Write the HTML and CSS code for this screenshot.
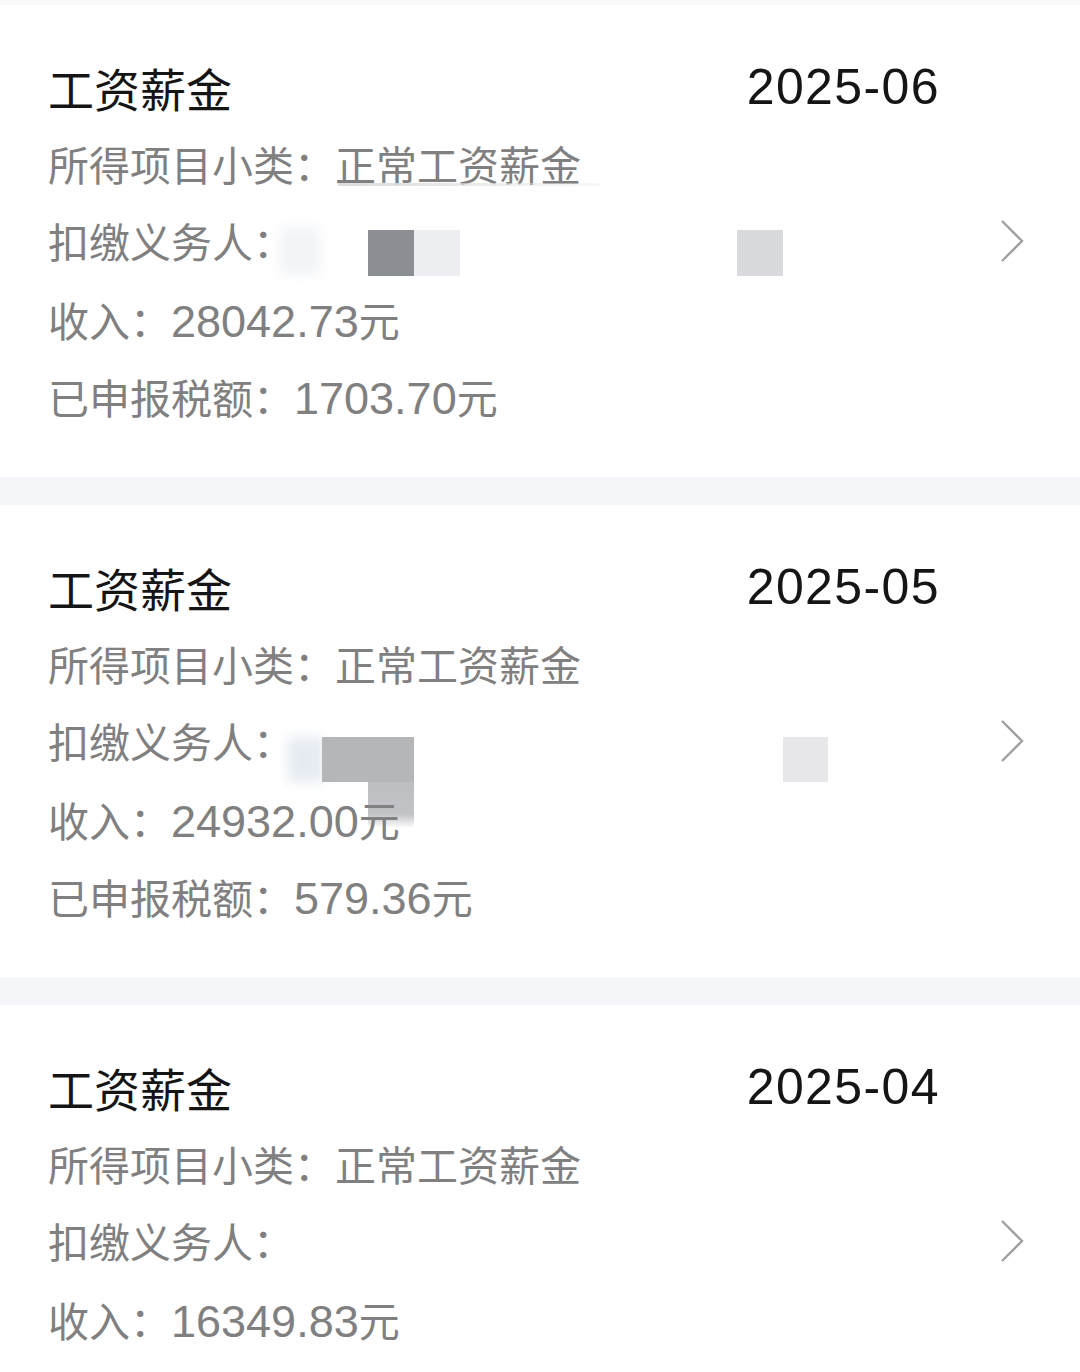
FILE: index.html
```html
<!DOCTYPE html>
<html lang="zh-CN">

<head>
    <meta charset="UTF-8">
    <meta name="viewport" content="width=device-width, initial-scale=1.0">
    <title>收入纳税明细</title>
    <link rel="stylesheet" href="styles.css">
</head>

<body>
    <div class="list">
        <div class="card">
            <div class="info">
                <div class="head">
                    <span class="title">工资薪金</span>
                    <span class="date">2025-06</span>
                </div>
                <div class="line sub">所得项目小类：正常工资薪金<span class="smear"></span></div>
                <div class="line payer">扣缴义务人：
                    <span class="mask blob m1a"></span>
                    <span class="mask m1b"></span>
                    <span class="mask m1c"></span>
                    <span class="mask m1d"></span>
                </div>
                <div class="line">收入：<span class="num">28042.73</span>元</div>
                <div class="line">已申报税额：<span class="num">1703.70</span>元</div>
            </div>
            <svg class="arrow" viewBox="0 0 24 44" width="24" height="44">
                <path d="M2 2 L22 22 L2 42" fill="none" stroke="#a0a0a0" stroke-width="2.4" />
            </svg>
        </div>

        <div class="card">
            <div class="info">
                <div class="head">
                    <span class="title">工资薪金</span>
                    <span class="date">2025-05</span>
                </div>
                <div class="line sub">所得项目小类：正常工资薪金</div>
                <div class="line payer">扣缴义务人：
                    <span class="mask blob m2a"></span>
                    <span class="mask m2b"></span>
                    <span class="mask m2c"></span>
                    <span class="mask m2d"></span>
                </div>
                <div class="line">收入：<span class="num">24932.00</span>元</div>
                <div class="line">已申报税额：<span class="num">579.36</span>元</div>
            </div>
            <svg class="arrow" viewBox="0 0 24 44" width="24" height="44">
                <path d="M2 2 L22 22 L2 42" fill="none" stroke="#a0a0a0" stroke-width="2.4" />
            </svg>
        </div>

        <div class="card last">
            <div class="info">
                <div class="head">
                    <span class="title">工资薪金</span>
                    <span class="date">2025-04</span>
                </div>
                <div class="line sub">所得项目小类：正常工资薪金</div>
                <div class="line payer">扣缴义务人：</div>
                <div class="line">收入：<span class="num">16349.83</span>元</div>
            </div>
            <svg class="arrow" viewBox="0 0 24 44" width="24" height="44">
                <path d="M2 2 L22 22 L2 42" fill="none" stroke="#a0a0a0" stroke-width="2.4" />
            </svg>
        </div>
    </div>
</body>

</html>
```

FILE: styles.css
```css
body {
    margin: 0;
    padding: 0;
    background-color: #f4f6f9;
    font-family: "Liberation Sans", "Noto Sans CJK SC", sans-serif;
}

.list {
    display: flex;
    flex-direction: column;
    gap: 28px;
    padding-top: 5px;
    background: linear-gradient(#f8f9f9 5px, transparent 5px);
}

.card {
    background-color: #ffffff;
    display: flex;
    align-items: center;
    padding: 50px 56px 40px 48px;
}

.card.last {
    align-items: flex-start;
    padding-bottom: 117px;
}

.card.last .arrow {
    margin-top: 164px;
}

.info {
    flex: 1;
}

.head {
    display: flex;
    justify-content: space-between;
    align-items: center;
    height: 64px;
    margin-bottom: 10px;
}

.title {
    font-size: 46px;
    color: #151515;
    font-family: "Noto Sans CJK SC", sans-serif;
}

.date {
    font-size: 50px;
    color: #151515;
    letter-spacing: 1.4px;
}

.line {
    position: relative;
    height: 77px;
    line-height: 77px;
    font-size: 41px;
    color: #808080;
    white-space: nowrap;
}

.num {
    font-size: 45px;
}

.arrow {
    margin-left: 60px;
    margin-bottom: 10px;
    flex-shrink: 0;
}

/* 打码遮挡 */
.mask {
    position: absolute;
    display: block;
}

.blob {
    filter: blur(6px);
}

.m1a {
    left: 232px;
    top: 22px;
    width: 40px;
    height: 46px;
    background-color: #f1f3f7;
}

.m1b {
    left: 320px;
    top: 24px;
    width: 46px;
    height: 46px;
    background-color: #8b8e92;
}

.m1c {
    left: 366px;
    top: 24px;
    width: 46px;
    height: 46px;
    background-color: #eceef1;
}

.m1d {
    left: 689px;
    top: 24px;
    width: 46px;
    height: 46px;
    background-color: #d9dadd;
}

.m2a {
    left: 240px;
    top: 31px;
    width: 36px;
    height: 45px;
    background-color: #e6ebf2;
}

.m2b {
    left: 274px;
    top: 31px;
    width: 92px;
    height: 45px;
    background-color: #b5b6b8;
}

.m2c {
    left: 320px;
    top: 76px;
    width: 46px;
    height: 46px;
    background: linear-gradient(#bdbec1, #c2c3c7 70%, rgba(200, 201, 205, 0));
}

.m2d {
    left: 735px;
    top: 31px;
    width: 45px;
    height: 45px;
    background-color: #e7e7e9;
}

.smear {
    position: absolute;
    left: 290px;
    top: 54px;
    width: 262px;
    height: 3px;
    background: linear-gradient(90deg, #dcdcdc, rgba(230, 230, 230, 0.3));
}
```
